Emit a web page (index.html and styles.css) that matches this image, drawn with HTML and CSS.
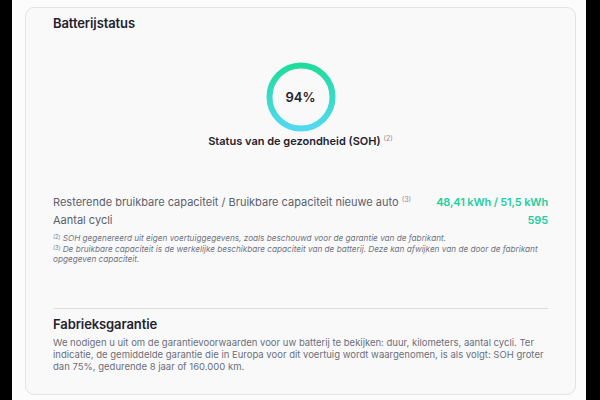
FILE: index.html
```html
<!DOCTYPE html>
<html lang="nl">
<head>
<meta charset="utf-8">
<link rel="stylesheet" href="styles.css">
</head>
<body>
<div class="frame">
  <div class="stage">
    <section class="card">
      <h2 class="title">Batterijstatus</h2>
      <div class="gauge">
        <div class="ring">
          <svg width="70" height="70" viewBox="0 0 70 70">
            <defs>
              <linearGradient id="g" x1="0" y1="0" x2="0" y2="1">
                <stop offset="0" stop-color="#1fdc9b"/>
                <stop offset="1" stop-color="#52d9f2"/>
              </linearGradient>
            </defs>
            <circle cx="35" cy="35" r="31.5" fill="none" stroke="url(#g)" stroke-width="6"/>
          </svg>
          <span class="pct">94%</span>
        </div>
        <div class="soh">Status van de gezondheid (SOH) <sup>(2)</sup></div>
      </div>
      <div class="rows">
        <div class="row"><span class="label">Resterende bruikbare capaciteit / Bruikbare capaciteit nieuwe auto <sup>(3)</sup></span><span class="val">48,41 kWh / 51,5 kWh</span></div>
        <div class="row"><span class="label">Aantal cycli</span><span class="val">595</span></div>
      </div>
      <div class="notes">
        <p><sup>(2)</sup> SOH gegenereerd uit eigen voertuiggegevens, zoals beschouwd voor de garantie van de fabrikant.</p>
        <p><sup>(3)</sup> De bruikbare capaciteit is de werkelijke beschikbare capaciteit van de batterij. Deze kan afwijken van de door de fabrikant opgegeven capaciteit.</p>
      </div>
      <div class="warranty">
        <h2 class="title">Fabrieksgarantie</h2>
        <p class="text">We nodigen u uit om de garantievoorwaarden voor uw batterij te bekijken: duur, kilometers, aantal cycli. Ter indicatie, de gemiddelde garantie die in Europa voor dit voertuig wordt waargenomen, is als volgt: SOH groter dan 75%, gedurende 8 jaar of 160.000 km.</p>
      </div>
    </section>
  </div>
</div>
</body>
</html>
```
FILE: styles.css
```css
html, body { margin: 0; padding: 0; }
body {
  width: 600px;
  height: 400px;
  overflow: hidden;
  background: #000;
  font-family: Inter, "Liberation Sans", sans-serif;
}
.frame {
  display: flex;
  height: 400px;
  padding: 0 14px 0 12px;
}
.stage {
  flex: 1;
  background: #fcfcfc;
  padding: 7px 10px 0 13px;
  overflow: hidden;
}
.card {
  background: #f9f9f9;
  border: 1px solid #e3e3e5;
  border-radius: 9px;
  height: 388px;
  box-sizing: border-box;
  padding: 6px 27px 0 27px;
}
.title {
  margin: 0;
  font-size: 13px;
  font-weight: 600;
  color: #1f2230;
  letter-spacing: -0.1px;
  line-height: 18px;
}
.gauge {
  display: flex;
  flex-direction: column;
  align-items: center;
  margin-top: 30px;
}
.ring {
  position: relative;
  width: 70px;
  height: 70px;
}
.ring svg { display: block; }
.pct {
  position: absolute;
  inset: 0;
  display: flex;
  align-items: center;
  justify-content: center;
  font-size: 13px;
  font-weight: 600;
  color: #1f2230;
}
.soh {
  margin-top: 2px;
  font-size: 11px;
  font-weight: 600;
  color: #1f2230;
}
sup {
  font-size: 7px;
  font-weight: 400;
  color: #8a8d98;
  vertical-align: 4px;
  line-height: 0;
}
.rows {
  margin-top: 46px;
  display: flex;
  flex-direction: column;
  gap: 2px;
}
.row {
  display: flex;
  justify-content: space-between;
  align-items: baseline;
  line-height: 16px;
}
.label {
  font-size: 11px;
  color: #5b5f6e;
}
.val {
  font-size: 11px;
  font-weight: 600;
  letter-spacing: -0.15px;
  color: #22cf9f;
}
.notes {
  margin-top: 5px;
  font-size: 8.2px;
  font-style: italic;
  color: #707482;
  line-height: 10.5px;
}
.notes p { margin: 0; }
.notes sup { font-size: 5.5px; vertical-align: 2px; color: #707482; }
.warranty {
  margin-top: 43px;
  border-top: 1px solid #dcdde2;
  padding-top: 6px;
}
.warranty .title { font-size: 13px; }
.text {
  margin: 4px 0 0;
  font-size: 9.5px;
  line-height: 12px;
  color: #6b6f7c;
}
```
